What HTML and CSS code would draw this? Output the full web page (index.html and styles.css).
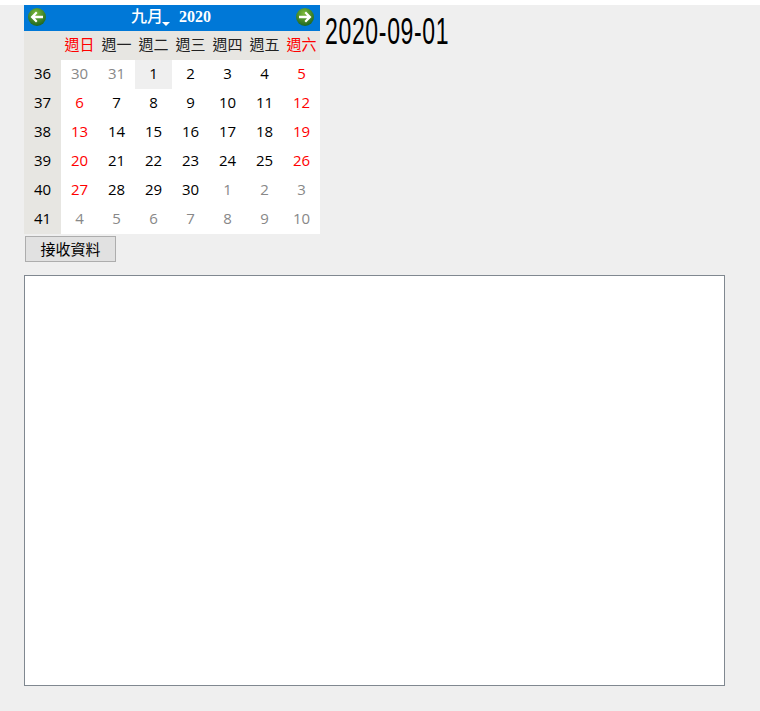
FILE: index.html
```html
<!DOCTYPE html>
<html lang="zh-Hant">
<head>
<meta charset="utf-8">
<title>接收資料</title>
<link rel="stylesheet" href="styles.css">
</head>
<body>
<main class="page">
  <div class="top">
    <div class="calendar">
      <div class="cal-head">
        <svg class="nav" viewBox="0 0 18 18" width="18" height="18"><defs><radialGradient id="g1" cx="45%" cy="30%" r="75%"><stop offset="0" stop-color="#7dbb3a"/><stop offset="1" stop-color="#17601f"/></radialGradient></defs><circle cx="9" cy="9" r="9" fill="url(#g1)"/><path d="M2.5 9 L8 3.5 L9.5 5 L7 7.7 H15 V10.3 H7 L9.5 13 L8 14.5 Z" fill="#fff"/></svg>
        <div class="title"><span class="month">九月<i class="caret"></i></span><span>2020</span></div>
        <svg class="nav" viewBox="0 0 18 18" width="18" height="18"><defs><radialGradient id="g2" cx="45%" cy="30%" r="75%"><stop offset="0" stop-color="#7dbb3a"/><stop offset="1" stop-color="#17601f"/></radialGradient></defs><circle cx="9" cy="9" r="9" fill="url(#g2)"/><path d="M15.5 9 L10 3.5 L8.5 5 L11 7.7 H3 V10.3 H11 L8.5 13 L10 14.5 Z" fill="#fff"/></svg>
      </div>
      <div class="grid">
        <div class="dow"></div><div class="dow red">週日</div><div class="dow">週一</div><div class="dow">週二</div><div class="dow">週三</div><div class="dow">週四</div><div class="dow">週五</div><div class="dow red">週六</div>
        <div class="wk">36</div><div class="d muted">30</div><div class="d muted">31</div><div class="d today">1</div><div class="d">2</div><div class="d">3</div><div class="d">4</div><div class="d red">5</div>
        <div class="wk">37</div><div class="d red">6</div><div class="d">7</div><div class="d">8</div><div class="d">9</div><div class="d">10</div><div class="d">11</div><div class="d red">12</div>
        <div class="wk">38</div><div class="d red">13</div><div class="d">14</div><div class="d">15</div><div class="d">16</div><div class="d">17</div><div class="d">18</div><div class="d red">19</div>
        <div class="wk">39</div><div class="d red">20</div><div class="d">21</div><div class="d">22</div><div class="d">23</div><div class="d">24</div><div class="d">25</div><div class="d red">26</div>
        <div class="wk">40</div><div class="d red">27</div><div class="d">28</div><div class="d">29</div><div class="d">30</div><div class="d muted">1</div><div class="d muted">2</div><div class="d muted">3</div>
        <div class="wk">41</div><div class="d muted">4</div><div class="d muted">5</div><div class="d muted">6</div><div class="d muted">7</div><div class="d muted">8</div><div class="d muted">9</div><div class="d muted">10</div>
      </div>
    </div>
    <div class="date">2020-09-01</div>
  </div>
  <button class="btn" type="button">接收資料</button>
  <textarea class="box"></textarea>
</main>
</body>
</html>
```
FILE: styles.css
```css
html, body { margin: 0; padding: 0; background: #fff; }
body { height: 711px; overflow: hidden; font-family: "Open Sans", "Noto Sans CJK TC", sans-serif; }
.page {
  margin-top: 5px;
  height: 706px;
  box-sizing: border-box;
  padding-left: 24px;
  background: #efefef;
  display: flex;
  flex-direction: column;
  align-items: flex-start;
}
.top { display: flex; align-items: flex-start; }
.calendar { width: 296px; }
.cal-head {
  height: 26px;
  background: #0078d7;
  display: flex;
  align-items: center;
  justify-content: space-between;
  padding: 0 6px 2px 4px;
  box-sizing: border-box;
}
.nav { display: block; }
.title {
  display: flex;
  align-items: baseline;
  gap: 16px;
  color: #fff;
  font: bold 16px/20px "Liberation Serif", "Noto Sans CJK TC", serif;
}
.month { position: relative; font-weight: 500; }
.caret {
  width: 0; height: 0;
  border-left: 4px solid transparent;
  border-right: 4px solid transparent;
  border-top: 4px solid #fff;
  position: absolute;
  right: -7px;
  bottom: 1px;
}
.grid {
  display: grid;
  grid-template-columns: repeat(8, 37px);
  grid-auto-rows: 29px;
  background: #fff;
}
.grid > div { display: flex; align-items: center; justify-content: center; color: #000; padding-bottom: 3px; box-sizing: border-box; }
.grid .dow { background: #e7e6e2; font: 15px "Noto Sans CJK TC", sans-serif; color: #222; padding-bottom: 4px; }
.grid .wk { background: #e7e6e2; font-size: 15px; }
.grid .d { font-size: 15px; }
.grid .today { background: #efefef; }
.grid .red { color: #f00; }
.grid .muted { color: #888; }
.date {
  margin: 9px 0 0 5px;
  font: 36px/1 "Liberation Sans", sans-serif;
  letter-spacing: 1px;
  color: #000;
  transform: scaleX(.64);
  transform-origin: 0 0;
  height: 40px;
}
.btn {
  margin: 2px 0 0 1px;
  width: 91px;
  height: 26px;
  padding: 0 0 2px;
  background: #e1e1e1;
  border: 1px solid #adadad;
  border-radius: 0;
  color: #000;
  font: 15px "Noto Sans CJK TC", sans-serif;
}
.box {
  display: block;
  margin: 13px 0 0 0;
  width: 701px;
  height: 411px;
  box-sizing: border-box;
  background: #fff;
  border: 1px solid #808890;
  border-radius: 0;
  padding: 2px;
  resize: none;
  outline: none;
}
```
